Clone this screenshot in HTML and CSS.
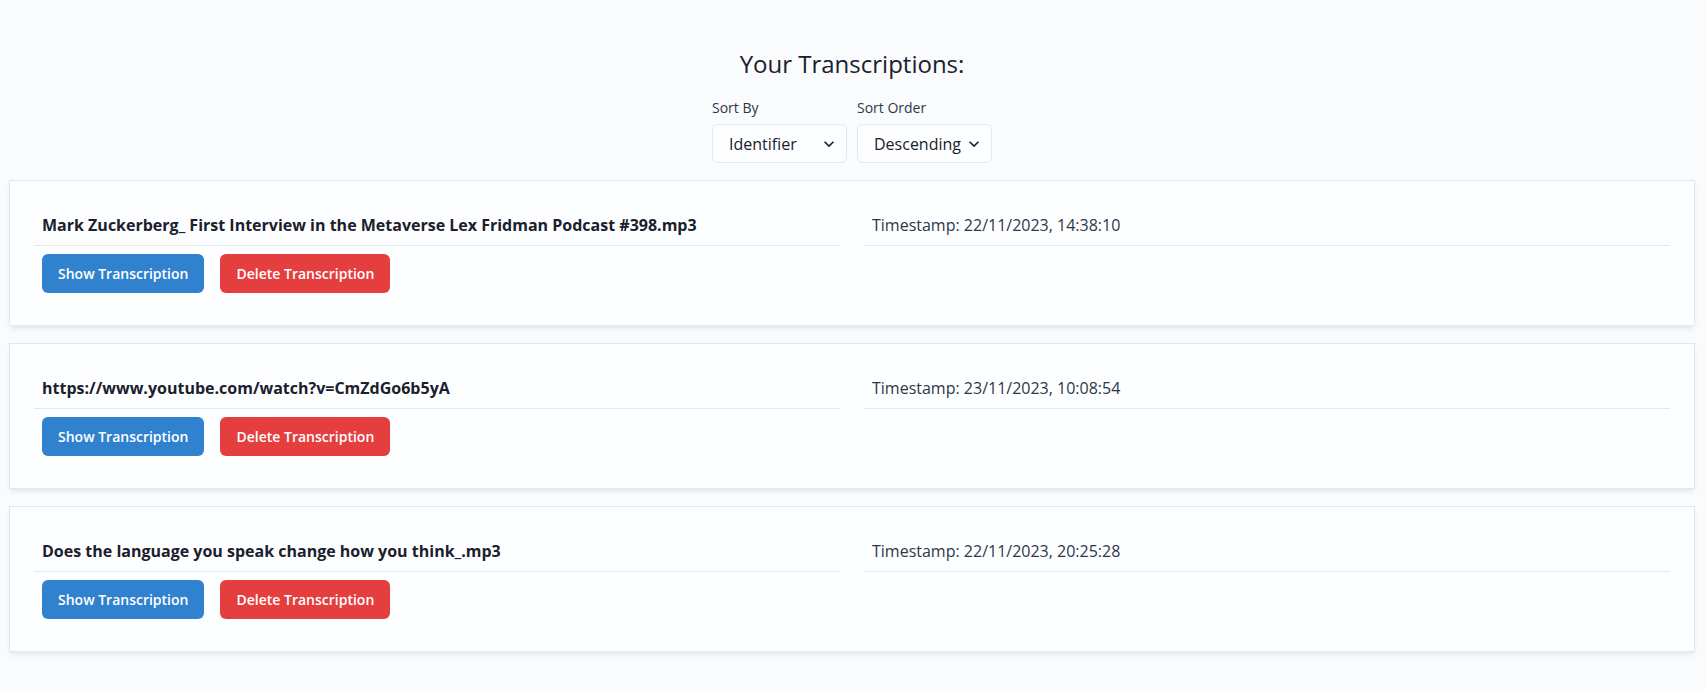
FILE: index.html
```html
<!DOCTYPE html>
<html lang="en">
<head>
<meta charset="utf-8">
<title>Your Transcriptions</title>
<link rel="stylesheet" href="styles.css">
</head>
<body>
<main class="page">
  <h2 class="heading">Your Transcriptions:</h2>
  <div class="sorts">
    <div class="field">
      <label class="label" for="sortBy">Sort By</label>
      <div class="select-wrap">
        <select id="sortBy" class="select">
          <option>Identifier</option>
          <option>Timestamp</option>
        </select>
        <svg class="chev" viewBox="0 0 24 24" aria-hidden="true"><path d="M16.59 8.59L12 13.17 7.41 8.59 6 10l6 6 6-6z"/></svg>
      </div>
    </div>
    <div class="field">
      <label class="label" for="sortOrder">Sort Order</label>
      <div class="select-wrap">
        <select id="sortOrder" class="select">
          <option>Descending</option>
          <option>Ascending</option>
        </select>
        <svg class="chev" viewBox="0 0 24 24" aria-hidden="true"><path d="M16.59 8.59L12 13.17 7.41 8.59 6 10l6 6 6-6z"/></svg>
      </div>
    </div>
  </div>

  <section class="card">
    <div class="grid">
      <div class="cell title">Mark Zuckerberg_ First Interview in the Metaverse Lex Fridman Podcast #398.mp3</div>
      <div class="cell stamp">Timestamp: 22/11/2023, 14:38:10</div>
    </div>
    <div class="actions">
      <button class="btn btn-blue">Show Transcription</button>
      <button class="btn btn-red">Delete Transcription</button>
    </div>
  </section>

  <section class="card">
    <div class="grid">
      <div class="cell title">https://www.youtube.com/watch?v=CmZdGo6b5yA</div>
      <div class="cell stamp">Timestamp: 23/11/2023, 10:08:54</div>
    </div>
    <div class="actions">
      <button class="btn btn-blue">Show Transcription</button>
      <button class="btn btn-red">Delete Transcription</button>
    </div>
  </section>

  <section class="card">
    <div class="grid">
      <div class="cell title">Does the language you speak change how you think_.mp3</div>
      <div class="cell stamp">Timestamp: 22/11/2023, 20:25:28</div>
    </div>
    <div class="actions">
      <button class="btn btn-blue">Show Transcription</button>
      <button class="btn btn-red">Delete Transcription</button>
    </div>
  </section>
</main>
</body>
</html>
```

FILE: styles.css
```css
* { box-sizing: border-box; }

html, body {
  margin: 0;
  padding: 0;
  background: #fafbfd;
}

body {
  font-family: "Open Sans", "Noto Sans", sans-serif;
  color: #1a202c;
  font-size: 16px;
  line-height: 1.5;
}

.page {
  padding: 47px 11px 30px 9px;
}

.heading {
  margin: 0;
  text-align: center;
  font-size: 24px;
  font-weight: 400;
  line-height: 34px;
  color: #1a202c;
}

.sorts {
  display: flex;
  justify-content: center;
  gap: 10px;
  margin-top: 16px;
  margin-bottom: 17px;
}

.field {
  display: flex;
  flex-direction: column;
}

.label {
  font-size: 14px;
  line-height: 21px;
  color: #2d3748;
  margin-bottom: 6px;
}

.select-wrap {
  position: relative;
  width: 135px;
  height: 39px;
}

.select {
  appearance: none;
  -webkit-appearance: none;
  width: 100%;
  height: 100%;
  border: 1px solid #e2e8f0;
  border-radius: 6px;
  background: #fdfeff;
  font-family: inherit;
  font-size: 16px;
  color: #1a202c;
  padding: 0 28px 0 16px;
  outline: none;
}

.chev {
  position: absolute;
  right: 8px;
  top: 50%;
  width: 20px;
  height: 20px;
  margin-top: -10px;
  fill: #1a202c;
  pointer-events: none;
}

.card {
  background: #fdfeff;
  border: 1px solid #e2e8f0;
  box-shadow: 0 4px 6px -1px rgba(0, 0, 0, 0.06), 0 2px 4px -1px rgba(0, 0, 0, 0.04);
  padding: 24px;
  margin-bottom: 17px;
}

.grid {
  display: grid;
  grid-template-columns: 1fr 1fr;
  column-gap: 24px;
}

.cell {
  padding: 8px;
  border-bottom: 1px solid #e2e8f0;
  line-height: 24px;
}

.title {
  font-weight: 700;
}

.stamp {
  font-weight: 400;
  color: #2d3748;
}

.actions {
  display: flex;
  gap: 16px;
  padding: 8px;
}

.btn {
  height: 39px;
  padding: 0 16px;
  border: 0;
  border-radius: 6px;
  font-family: inherit;
  font-size: 14px;
  font-weight: 600;
  color: #ffffff;
  cursor: pointer;
}

.btn-blue { background: #3182ce; }
.btn-red { background: #e53e3e; }
```
